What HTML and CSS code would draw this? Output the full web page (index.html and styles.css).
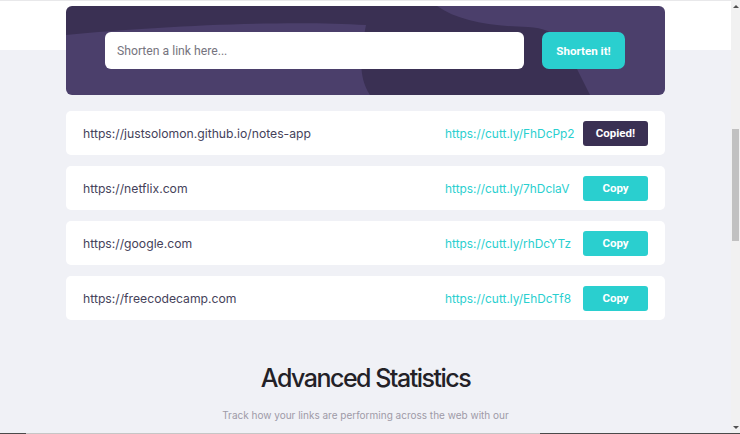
FILE: index.html
```html
<!DOCTYPE html>
<html lang="en">
<head>
<meta charset="utf-8">
<title>Shortly</title>
<link rel="stylesheet" href="styles.css">
</head>
<body>
<div class="window">
  <div class="viewport">
    <main class="page">
      <div class="container">
        <form class="shorten">
          <input class="shorten-input" type="text" placeholder="Shorten a link here...">
          <button class="shorten-btn" type="button">Shorten it!</button>
        </form>
        <ul class="links">
          <li class="link-row">
            <span class="original">https://justsolomon.github.io/notes-app</span>
            <div class="result">
              <a class="short" href="#">https://cutt.ly/FhDcPp2</a>
              <button class="copy copied" type="button">Copied!</button>
            </div>
          </li>
          <li class="link-row">
            <span class="original">https://netflix.com</span>
            <div class="result">
              <a class="short" href="#">https://cutt.ly/7hDclaV</a>
              <button class="copy" type="button">Copy</button>
            </div>
          </li>
          <li class="link-row">
            <span class="original">https://google.com</span>
            <div class="result">
              <a class="short" href="#">https://cutt.ly/rhDcYTz</a>
              <button class="copy" type="button">Copy</button>
            </div>
          </li>
          <li class="link-row">
            <span class="original">https://freecodecamp.com</span>
            <div class="result">
              <a class="short" href="#">https://cutt.ly/EhDcTf8</a>
              <button class="copy" type="button">Copy</button>
            </div>
          </li>
        </ul>
        <section class="stats">
          <h2 class="stats-title">Advanced Statistics</h2>
          <p class="stats-text">Track how your links are performing across the web with our advanced statistics dashboard.</p>
        </section>
      </div>
    </main>
    <div class="vscroll">
      <span class="arrow arrow-up"></span>
      <div class="track"><span class="thumb"></span></div>
      <span class="arrow arrow-down"></span>
    </div>
  </div>
  <div class="hscroll"><span class="h-dark"></span><span class="h-light"></span><span class="h-dark2"></span></div>
</div>
</body>
</html>
```
FILE: styles.css
```css
* { box-sizing: border-box; }
html, body { margin: 0; padding: 0; }
body {
  width: 740px;
  height: 434px;
  overflow: hidden;
  font-family: "Inter", "Noto Sans", sans-serif;
  background: #f0f1f6;
}
.window { display: flex; flex-direction: column; height: 434px; }
.viewport { display: flex; height: 433px; }
.page {
  flex: 1;
  overflow: hidden;
  border-top: 1px solid #e8e8ea;
  background: linear-gradient(to bottom, #ffffff 0, #ffffff 49px, #f0f1f6 49px);
  padding-top: 5px;
}
.container { width: 599px; margin: 0 auto; }

.shorten {
  margin: 0;
  height: 89px;
  border-radius: 6px;
  display: flex;
  align-items: center;
  padding: 0 40px 0 39px;
  gap: 18px;
  background-color: #3a3053;
  background-image: url("data:image/svg+xml;utf8,<svg xmlns='http://www.w3.org/2000/svg' width='599' height='89' viewBox='0 0 599 89'><path fill='%234b3f6b' d='M0 29 C90 20 220 14 300 19 C296 40 290 68 304 89 L0 89 Z'/><path fill='%234b3f6b' d='M371 0 C392 15 425 20 462 21 C492 22 506 42 511 63 L524 89 L599 89 L599 0 Z'/></svg>");
  background-repeat: no-repeat;
}
.shorten-input {
  flex: 1;
  height: 37px;
  border: none;
  border-radius: 6px;
  padding: 0 12px;
  font-family: "Roboto", "Liberation Sans", sans-serif;
  font-size: 12.2px;
  color: #35323e;
  outline: none;
}
.shorten-input::placeholder { color: #76747e; }
.shorten-btn {
  width: 83px;
  height: 37px;
  border: none;
  border-radius: 7px;
  background: #2acfcf;
  color: #fff;
  font-family: "Roboto", "Liberation Sans", sans-serif;
  font-weight: 700;
  font-size: 11.6px;
  padding: 0;
}

.links {
  list-style: none;
  margin: 16px 0 0;
  padding: 0;
  display: flex;
  flex-direction: column;
  gap: 11px;
}
.link-row {
  height: 44px;
  background: #fff;
  border-radius: 5px;
  display: flex;
  align-items: center;
  justify-content: space-between;
  padding: 0 17px;
}
.original {
  font-size: 12.2px;
  color: #45425a;
}
.result { display: flex; align-items: center; }
.short {
  width: 138px;
  font-size: 11.9px;
  color: #2acfcf;
  text-decoration: none;
}
.copy {
  width: 65px;
  height: 25px;
  border: none;
  border-radius: 3px;
  background: #2acfcf;
  color: #fff;
  font-family: "Roboto", "Inter", sans-serif;
  font-weight: 700;
  font-size: 11.5px;
  padding: 0;
}
.copy.copied { background: #3a3053; }

.stats { text-align: center; margin-top: 38px; }
.stats-title {
  margin: 0;
  font-size: 25px;
  font-weight: 500;
  letter-spacing: -1.5px;
  color: #232127;
  line-height: 40px;
}
.stats-text {
  width: 300px;
  margin: 5px auto 0;
  font-size: 10px;
  line-height: 24px;
  color: #9e9aa7;
}

.vscroll {
  width: 9px;
  background: #f1f1f1;
  display: flex;
  flex-direction: column;
  align-items: center;
}
.arrow { width: 0; height: 0; border-left: 3px solid transparent; border-right: 3px solid transparent; }
.arrow-up { margin-top: 5px; border-bottom: 3px solid #505050; }
.arrow-down { margin-bottom: 4px; border-top: 3px solid #505050; }
.track { flex: 1; width: 100%; padding-top: 121px; display: flex; justify-content: center; }
.thumb { display: block; width: 7px; height: 112px; background: #c1c1c1; }

.hscroll { height: 1px; display: flex; }
.h-dark { width: 26px; background: #4a4a4a; }
.h-light { flex: 1; background: #c6c6c6; }
.h-dark2 { width: 200px; background: #4a4a4a; }
```
